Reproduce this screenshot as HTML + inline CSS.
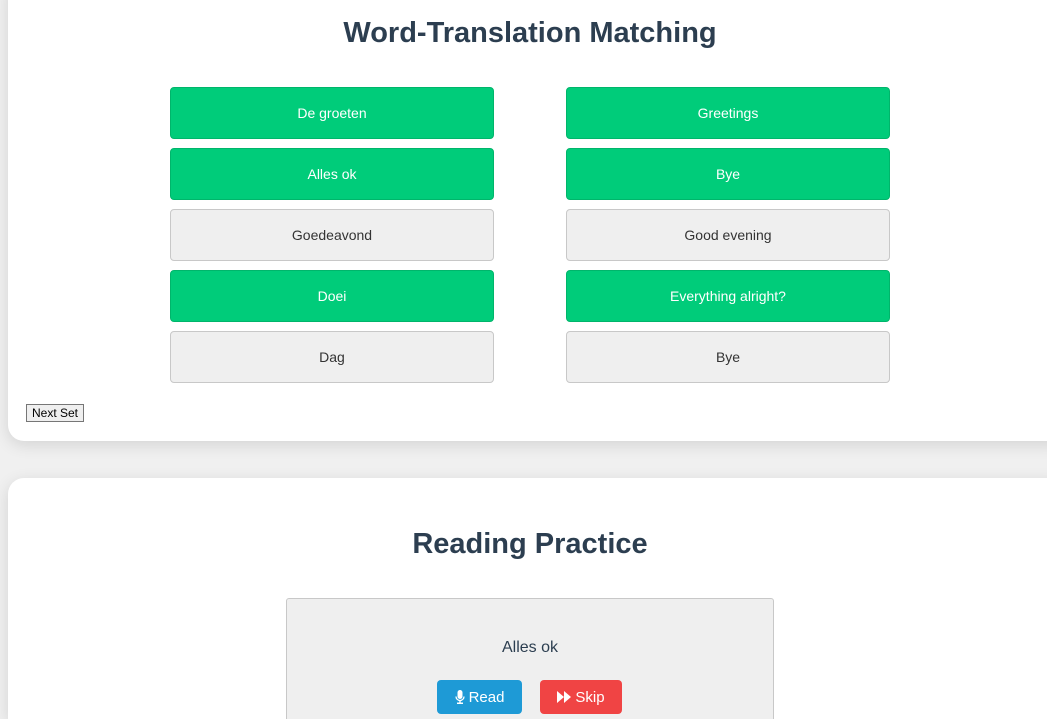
<!DOCTYPE html>
<html style="height:719px;overflow:hidden"><head><style>
body{margin:0;background:#f0f0f0;font-family:"Liberation Sans",Arial,sans-serif;width:1047px;height:719px;overflow:hidden;position:relative}
.card{position:absolute;left:8px;width:1060px;background:#fff;border-radius:16px;box-shadow:0 4px 16px rgba(0,0,0,.12)}
h2{position:absolute;left:0;width:1044px;margin:0;text-align:center;font-size:29px;font-weight:bold;color:#2c3e50}
.b{position:absolute;width:322px;height:50px;border-radius:4px;display:flex;align-items:center;justify-content:center;font-size:14px}
.g{background:#00cc7a;border:1px solid #00b56b;color:#fff}
.n{background:#efefef;border:1px solid #c8c8c8;color:#333}
</style></head><body>
<div class="card" style="top:-20px;height:461px">
<h2 style="top:37px">Word-Translation Matching</h2>
<div class="b g" style="left:162px;top:107px">De groeten</div>
<div class="b g" style="left:558px;top:107px">Greetings</div>
<div class="b g" style="left:162px;top:168px">Alles ok</div>
<div class="b g" style="left:558px;top:168px">Bye</div>
<div class="b n" style="left:162px;top:229px">Goedeavond</div>
<div class="b n" style="left:558px;top:229px">Good evening</div>
<div class="b g" style="left:162px;top:290px">Doei</div>
<div class="b g" style="left:558px;top:290px">Everything alright?</div>
<div class="b n" style="left:162px;top:351px">Dag</div>
<div class="b n" style="left:558px;top:351px">Bye</div>
<div style="position:absolute;left:18px;top:424px;width:56px;height:16px;border:1px solid #767676;background:#efefef;font-size:12px;line-height:16px;text-align:center;color:#000">Next Set</div>
</div>
<div class="card" style="top:478px;height:241px;border-bottom-left-radius:0;border-bottom-right-radius:0">
<h2 style="top:50px">Reading Practice</h2>
<div style="position:absolute;left:278px;top:120px;width:486px;height:140px;background:#efefef;border:1px solid #c8c8c8;border-radius:3px">
<div style="position:absolute;top:40px;width:100%;text-align:center;font-size:16px;color:#2c3e50">Alles ok</div>
<div style="position:absolute;left:150px;top:81px;width:85px;height:34px;background:#1e9ad6;border-radius:4px;color:#fff;font-size:15px;display:flex;align-items:center;justify-content:center"><svg width="10" height="14" viewBox="0 0 10 14" style="margin-right:4px"><rect x="2.5" y="0" width="5" height="9" rx="2.5" fill="#fff"/><path d="M1 6.5a4 4 0 0 0 8 0" stroke="#fff" stroke-width="1.3" fill="none"/><rect x="4.3" y="10" width="1.4" height="3" fill="#fff"/><rect x="2" y="12.5" width="6" height="1.5" fill="#fff"/></svg>Read</div>
<div style="position:absolute;left:253px;top:81px;width:82px;height:34px;background:#f04444;border-radius:4px;color:#fff;font-size:15px;display:flex;align-items:center;justify-content:center"><svg width="14" height="12" viewBox="0 0 14 12" style="margin-right:4px"><path d="M0 0L7 6L0 12Z M7 0L14 6L7 12Z" fill="#fff"/></svg>Skip</div>
</div>
</div>
</body></html>
